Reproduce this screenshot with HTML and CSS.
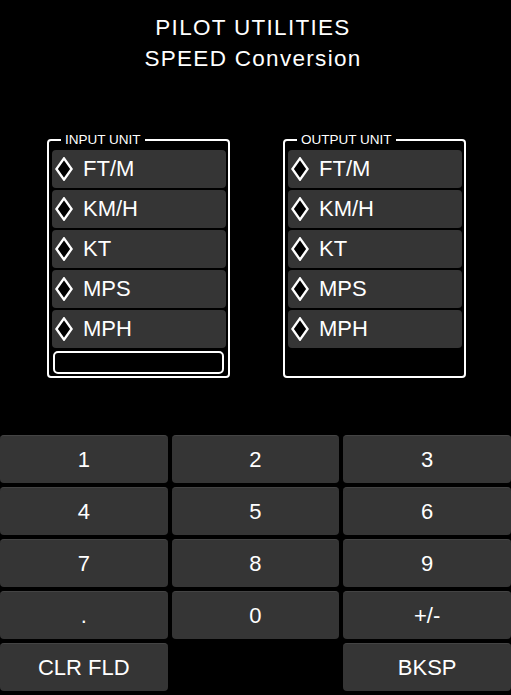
FILE: index.html
```html
<!DOCTYPE html>
<html>
<head>
<meta charset="utf-8">
<link rel="stylesheet" href="styles.css">
</head>
<body>
<div class="screen">
  <header class="title">
    <div>PILOT UTILITIES</div>
    <div>SPEED Conversion</div>
  </header>
  <div class="panels">
    <fieldset class="unit-box">
      <legend>INPUT UNIT</legend>
      <div class="item"><svg class="dia" viewBox="0 0 18 24"><polygon points="9,1.4 16.6,12 9,22.6 1.4,12"/></svg><span>FT/M</span></div>
      <div class="item"><svg class="dia" viewBox="0 0 18 24"><polygon points="9,1.4 16.6,12 9,22.6 1.4,12"/></svg><span>KM/H</span></div>
      <div class="item"><svg class="dia" viewBox="0 0 18 24"><polygon points="9,1.4 16.6,12 9,22.6 1.4,12"/></svg><span>KT</span></div>
      <div class="item"><svg class="dia" viewBox="0 0 18 24"><polygon points="9,1.4 16.6,12 9,22.6 1.4,12"/></svg><span>MPS</span></div>
      <div class="item"><svg class="dia" viewBox="0 0 18 24"><polygon points="9,1.4 16.6,12 9,22.6 1.4,12"/></svg><span>MPH</span></div>
      <div class="field"></div>
    </fieldset>
    <fieldset class="unit-box">
      <legend>OUTPUT UNIT</legend>
      <div class="item"><svg class="dia" viewBox="0 0 18 24"><polygon points="9,1.4 16.6,12 9,22.6 1.4,12"/></svg><span>FT/M</span></div>
      <div class="item"><svg class="dia" viewBox="0 0 18 24"><polygon points="9,1.4 16.6,12 9,22.6 1.4,12"/></svg><span>KM/H</span></div>
      <div class="item"><svg class="dia" viewBox="0 0 18 24"><polygon points="9,1.4 16.6,12 9,22.6 1.4,12"/></svg><span>KT</span></div>
      <div class="item"><svg class="dia" viewBox="0 0 18 24"><polygon points="9,1.4 16.6,12 9,22.6 1.4,12"/></svg><span>MPS</span></div>
      <div class="item"><svg class="dia" viewBox="0 0 18 24"><polygon points="9,1.4 16.6,12 9,22.6 1.4,12"/></svg><span>MPH</span></div>
    </fieldset>
  </div>
  <div class="keypad">
    <div class="key">1</div>
    <div class="key">2</div>
    <div class="key">3</div>
    <div class="key">4</div>
    <div class="key">5</div>
    <div class="key">6</div>
    <div class="key">7</div>
    <div class="key">8</div>
    <div class="key">9</div>
    <div class="key">.</div>
    <div class="key">0</div>
    <div class="key">+/-</div>
    <div class="key">CLR FLD</div>
    <div class="blank"></div>
    <div class="key">BKSP</div>
  </div>
</div>
</body>
</html>
```
FILE: styles.css
```css
html, body {
  margin: 0;
  padding: 0;
  background: #000;
}
body {
  font-family: "Liberation Sans", Arial, sans-serif;
  color: #fff;
}
.screen {
  width: 511px;
  height: 695px;
  background: #000;
  display: flex;
  flex-direction: column;
  overflow: hidden;
}
.title {
  padding-top: 12px;
  padding-right: 5px;
  text-align: center;
  font-size: 22.5px;
  letter-spacing: 1.3px;
  line-height: 31px;
}
.panels {
  display: flex;
  align-items: stretch;
  gap: 53px;
  padding-left: 47px;
  margin-top: 59px;
}
.unit-box {
  margin: 0;
  width: 183px;
  box-sizing: border-box;
  border: 2px solid #fff;
  border-radius: 4px;
  padding: 3px 2px 2px 3px;
  display: flex;
  flex-direction: column;
  gap: 2px;
}
.unit-box legend {
  font-size: 13.5px;
  line-height: 14px;
  padding: 0 4px;
  margin-left: 9px;
}
.item {
  height: 38px;
  background: #353535;
  border-radius: 4px;
  display: flex;
  align-items: center;
  font-size: 22px;
}
.dia {
  width: 18px;
  height: 24px;
  margin-left: 3px;
  margin-right: 10px;
  flex: none;
}
.dia polygon {
  fill: #000;
  stroke: #fff;
  stroke-width: 2.4;
  stroke-linejoin: miter;
}
.field {
  margin-top: 1px;
  height: 23px;
  box-sizing: border-box;
  border: 2px solid #fff;
  border-radius: 5px;
  margin-left: 1px;
  margin-right: 2px;
  background: #000;
}
.keypad {
  margin-top: 57px;
  display: grid;
  grid-template-columns: repeat(3, 1fr);
  grid-auto-rows: 48px;
  gap: 4px;
}
.key {
  background: #353535;
  border-top: 1px solid #444;
  box-sizing: border-box;
  border-radius: 4px;
  display: flex;
  align-items: center;
  justify-content: center;
  font-size: 22px;
  color: #fff;
}
```
